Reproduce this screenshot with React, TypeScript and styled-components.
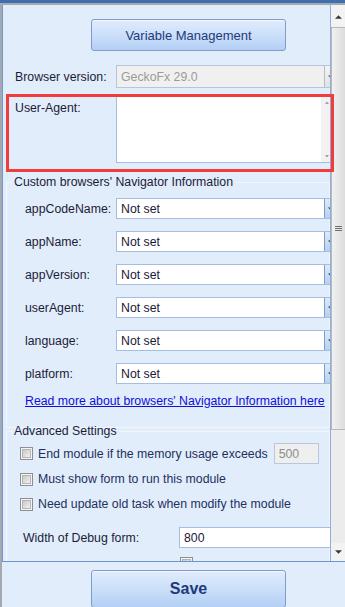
import React, { FC } from 'react';
import styled, { createGlobalStyle } from 'styled-components';

const GlobalStyle = createGlobalStyle`
  html, body { margin: 0; padding: 0; }
  body {
    font-family: "Liberation Sans", Arial, sans-serif;
    font-size: 12.3px;
    background: #e2edfc;
  }
`;

// окно и рамки
const Window = styled.div`
  position: relative;
  width: 345px;
  height: 607px;
  display: flex;
  flex-direction: column;
  overflow: hidden;
  background: #e2edfc;
`;
const TitleEdge = styled.div`
  height: 3px;
  flex-shrink: 0;
  background: #3f6eb1;
`;
const Frame = styled.div`
  flex: 1;
  display: flex;
  flex-direction: column;
  min-height: 0;
  border-left: 2px solid #a4a9b1;
  border-top: 2px solid #a6a9ae;
`;
const ScrollPanel = styled.div`
  display: flex;
  height: 557px;
  flex-shrink: 0;
  box-sizing: border-box;
  border-left: 1px solid #7099d1;
  border-bottom: 1px solid #6c95ce;
`;
const Content = styled.div`
  flex: 1;
  overflow: hidden;
  border-right: 1px solid #8eafdc;
  color: #1c1c38;
`;

// скроллбар
const ScrollBar = styled.div`
  width: 14px;
  flex-shrink: 0;
  display: flex;
  flex-direction: column;
  background: #ececec;
`;
const ScrollBtn = styled.div<{ $h: number }>`
  height: ${p => p.$h}px;
  flex-shrink: 0;
  display: flex;
  align-items: center;
  justify-content: center;
  background: #f3f3f3;
`;
const Thumb = styled.div`
  height: 403px;
  flex-shrink: 0;
  box-sizing: border-box;
  border: 1px solid #b9b9b9;
  border-right: none;
  background: linear-gradient(to right, #f1f1f1, #dcdcdc);
  display: flex;
  align-items: center;
  justify-content: center;
`;
const Track = styled.div`
  flex: 1;
`;

// кнопки
const BlueButton = styled.button<{ $bold?: boolean; $h: number }>`
  display: block;
  width: 195px;
  height: ${p => p.$h}px;
  padding: 0;
  box-sizing: border-box;
  border: 1px solid #7f9dca;
  border-radius: 3px;
  background: linear-gradient(#e1ecfc, #cbdff9 50%, #b3cff5);
  box-shadow: inset 0 1px 0 #f4f8fe;
  color: #1f3a7a;
  font-family: "Liberation Sans", Arial, sans-serif;
  font-size: ${p => (p.$bold ? 16 : 13)}px;
  font-weight: ${p => (p.$bold ? 700 : 400)};
`;
const VarButtonWrap = styled.div`
  margin: 14px 0 0 88px;
`;

// строки формы
const Row = styled.div<{ $mt: number; $h: number; $pl: number; $top?: boolean }>`
  display: flex;
  align-items: ${p => (p.$top ? 'flex-start' : 'center')};
  margin-top: ${p => p.$mt}px;
  height: ${p => p.$h}px;
  padding-left: ${p => p.$pl}px;
  white-space: nowrap;
`;
const Label = styled.span<{ $w: number; $pt?: number }>`
  width: ${p => p.$w}px;
  flex-shrink: 0;
  padding-top: ${p => p.$pt ?? 0}px;
  color: #1c1c38;
`;
const Combo = styled.div<{ $disabled?: boolean; $h: number; $w?: number }>`
  display: flex;
  flex-shrink: 0;
  width: ${p => p.$w ?? 226}px;
  height: ${p => p.$h}px;
  box-sizing: border-box;
  border: 1px solid ${p => (p.$disabled ? '#b7c5d8' : '#a4bde0')};
  background: ${p => (p.$disabled ? '#f0f0f0' : '#ffffff')};
`;
const ComboText = styled.span<{ $disabled?: boolean }>`
  flex: 1;
  padding-left: 4px;
  align-self: center;
  color: ${p => (p.$disabled ? '#9b9b9b' : '#1a1a3a')};
`;
const ComboArrow = styled.span<{ $disabled?: boolean }>`
  width: 17px;
  display: flex;
  align-items: center;
  padding-left: 3px;
  box-sizing: border-box;
  border-left: 1px solid ${p => (p.$disabled ? '#b2bccb' : '#7f9dc9')};
  background: ${p =>
    p.$disabled ? 'linear-gradient(#f4f4f4, #e2e2e2)' : 'linear-gradient(#dce9fb, #b6d0f4)'};
`;
const TextArea = styled.div`
  display: flex;
  width: 218px;
  height: 67px;
  flex-shrink: 0;
  box-sizing: border-box;
  border: 1px solid #a4bde0;
  background: #ffffff;
`;
const AreaBody = styled.div`
  flex: 1;
`;
const AreaStrip = styled.div`
  width: 12px;
  display: flex;
  flex-direction: column;
  justify-content: space-between;
  align-items: center;
  padding: 4px 0;
  background: #f2f2f2;
`;

// группы
const Group = styled.fieldset<{ $mt: number; $pb?: number }>`
  margin: ${p => p.$mt}px 0 0 3px;
  padding: 0 0 ${p => p.$pb ?? 0}px 0;
  width: 324px;
  min-width: 0;
  box-sizing: border-box;
  border: 1px solid #f2f5f9;
`;
const Legend = styled.legend`
  margin-left: 5px;
  padding: 0 2px;
  line-height: 12px;
  font-size: 12.3px;
  color: #1c1c38;
`;
const InfoLink = styled.a`
  display: block;
  margin: 10px 0 0 18px;
  line-height: 14px;
  color: #0f0fd9;
  text-decoration: underline;
  white-space: nowrap;
`;
const Check = styled.span`
  position: relative;
  display: inline-block;
  flex-shrink: 0;
  width: 13px;
  height: 13px;
  box-sizing: border-box;
  border: 1px solid #8e8f90;
  background: #f4f4f4;
  &::after {
    content: '';
    position: absolute;
    inset: 1px;
    border: 1px solid #b5b5b5;
    background: linear-gradient(135deg, #c9c9c9, #f0f0f0);
  }
`;
const CheckText = styled.span`
  margin-left: 5px;
  color: #22305e;
`;
const SmallBox = styled.span<{ $w: number; $disabled?: boolean }>`
  display: flex;
  align-items: center;
  flex-shrink: 0;
  width: ${p => p.$w}px;
  height: 21px;
  box-sizing: border-box;
  padding-left: 4px;
  margin-left: ${p => (p.$disabled ? 6 : 0)}px;
  border: 1px solid ${p => (p.$disabled ? '#b8c7da' : '#a4bde0')};
  background: ${p => (p.$disabled ? '#efefef' : '#ffffff')};
  color: ${p => (p.$disabled ? '#8d8d8d' : '#1a1a3a')};
`;

const Footer = styled.div`
  flex: 1;
  padding: 8px 0 0 89px;
`;

const Highlight = styled.div`
  position: absolute;
  left: 6px;
  top: 94px;
  width: 328px;
  height: 78px;
  box-sizing: border-box;
  border: 3px solid #f23b3b;
  pointer-events: none;
`;

const Tri: FC<{ up?: boolean; size?: number; color?: string }> = ({ up, size = 7, color = '#3a3a3a' }) => (
  <svg width={size} height={Math.ceil(size / 2) + 1} viewBox="0 0 8 5">
    <path d={up ? 'M0 5 L4 1 L8 5 Z' : 'M0 0 L8 0 L4 4 Z'} fill={color} />
  </svg>
);

const Grip: FC = () => (
  <svg width="7" height="7" viewBox="0 0 7 7">
    <path d="M0 1.5H7M0 3.5H7M0 5.5H7" stroke="#6f6f6f" strokeWidth="1" />
  </svg>
);

const navFields = ['appCodeName', 'appName', 'appVersion', 'userAgent', 'language', 'platform'];

const App: FC = () => {
  return (
    <Window>
      <GlobalStyle />
      <TitleEdge />
      <Frame>
        <ScrollPanel>
          <Content>
            <VarButtonWrap>
              <BlueButton $h={32}>Variable Management</BlueButton>
            </VarButtonWrap>

            <Row $mt={14} $h={23} $pl={12}>
              <Label $w={101}>Browser version:</Label>
              <Combo $disabled $h={23}>
                <ComboText $disabled>GeckoFx 29.0</ComboText>
                <ComboArrow $disabled>
                  <Tri size={5} color="#555" />
                </ComboArrow>
              </Combo>
            </Row>

            <Row $mt={8} $h={67} $pl={12} $top>
              <Label $w={101} $pt={5}>User-Agent:</Label>
              <TextArea>
                <AreaBody />
                <AreaStrip>
                  <Tri up size={4} color="#8a8a8a" />
                  <Tri size={4} color="#8a8a8a" />
                </AreaStrip>
              </TextArea>
            </Row>

            <Group $mt={13} $pb={19}>
              <Legend>Custom browsers' Navigator Information</Legend>
              {navFields.map((f, i) => (
                <Row key={f} $mt={i === 0 ? 10 : 12} $h={21} $pl={18}>
                  <Label $w={91}>{f}:</Label>
                  <Combo $h={21}>
                    <ComboText>Not set</ComboText>
                    <ComboArrow>
                      <Tri size={5} color="#333" />
                    </ComboArrow>
                  </Combo>
                </Row>
              ))}
              <InfoLink href="#">Read more about browsers' Navigator Information here</InfoLink>
            </Group>

            <Group $mt={-3}>
              <Legend>Advanced Settings</Legend>
              <Row $mt={6} $h={21} $pl={13}>
                <Check />
                <CheckText>End module if the memory usage exceeds</CheckText>
                <SmallBox $w={45} $disabled>500</SmallBox>
              </Row>
              <Row $mt={7} $h={16} $pl={13}>
                <Check />
                <CheckText>Must show form to run this module</CheckText>
              </Row>
              <Row $mt={9} $h={16} $pl={13}>
                <Check />
                <CheckText>Need update old task when modify the module</CheckText>
              </Row>
              <Row $mt={15} $h={21} $pl={16}>
                <Label $w={156}>Width of Debug form:</Label>
                <SmallBox $w={200}>800</SmallBox>
              </Row>
              <Row $mt={9} $h={13} $pl={173}>
                <Check />
              </Row>
            </Group>
          </Content>

          <ScrollBar>
            <ScrollBtn $h={22}>
              <Tri up />
            </ScrollBtn>
            <Thumb>
              <Grip />
            </Thumb>
            <Track />
            <ScrollBtn $h={18}>
              <Tri />
            </ScrollBtn>
          </ScrollBar>
        </ScrollPanel>

        <Footer>
          <BlueButton $bold $h={38}>Save</BlueButton>
        </Footer>
      </Frame>
      <Highlight />
    </Window>
  );
};

export default App;
